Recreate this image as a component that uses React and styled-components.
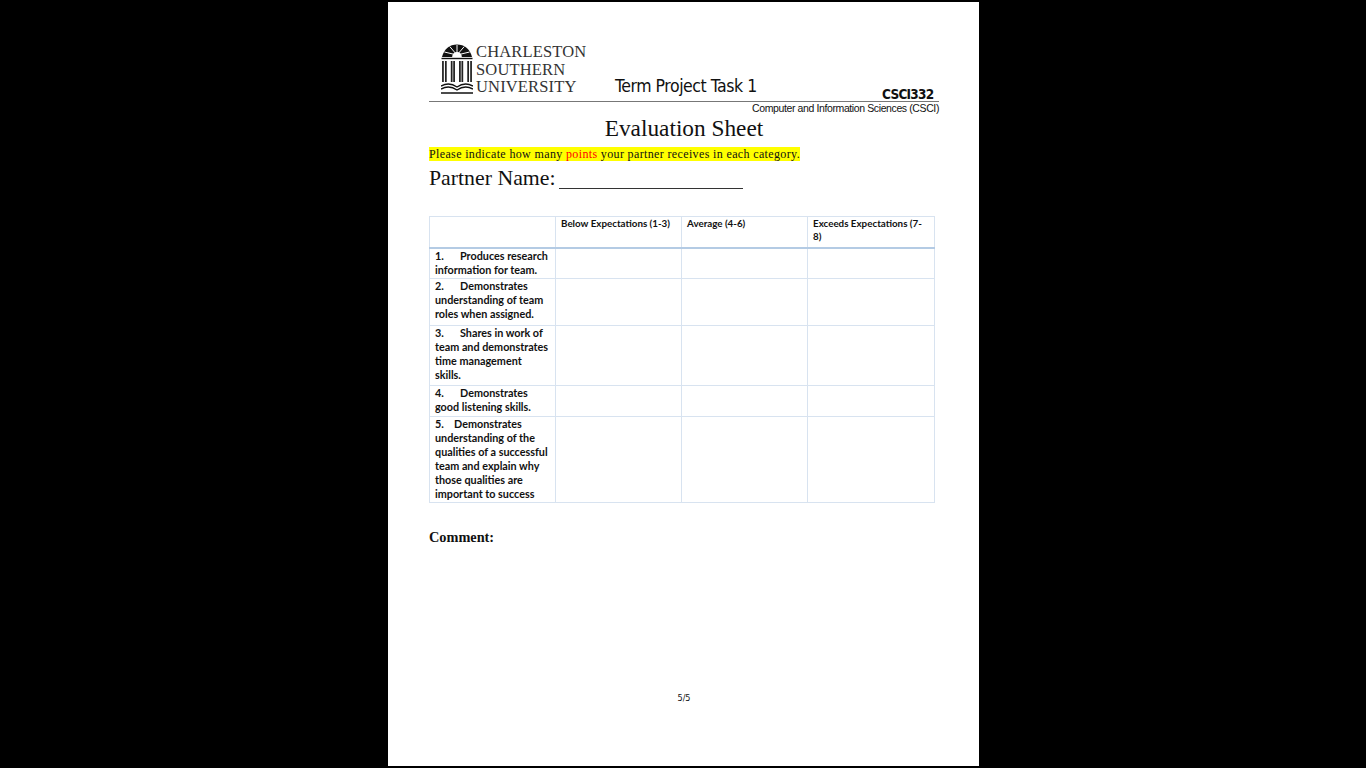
import React from 'react';
import styled, { createGlobalStyle } from 'styled-components';

const GlobalStyle = createGlobalStyle`
  html, body {
    margin: 0;
    padding: 0;
    background: #000;
  }
`;

const Viewer = styled.div`
  height: 768px;
  overflow: hidden;
  background: #000;
  display: flex;
  justify-content: center;
  padding-top: 2px;
  box-sizing: border-box;
`;

const Page = styled.div`
  width: 591px;
  height: 764px;
  margin-left: 1px;
  background: #fff;
  box-sizing: border-box;
  padding: 42px 40px 0 41px;
  color: #111;
  font-family: "Liberation Serif", serif;
`;

const Header = styled.div`
  height: 57px;
  display: flex;
  align-items: flex-end;
  border-bottom: 1px solid #777;
`;

const Logo = styled.div`
  width: 186px;
  height: 57px;
  display: flex;
  padding-left: 12px;
  box-sizing: border-box;
`;

const LogoText = styled.div`
  margin-left: 3px;
  margin-top: -1px;
  font-size: 16.5px;
  line-height: 17.5px;
  letter-spacing: 0.15px;
  color: #333;
`;

const TermTitle = styled.div`
  font-family: "DejaVu Sans", sans-serif;
  font-stretch: condensed;
  font-size: 17.5px;
  line-height: 20px;
  letter-spacing: -0.45px;
  margin-bottom: 5px;
  width: 267px;
`;

const Course = styled.div`
  font-family: "DejaVu Sans", sans-serif;
  font-weight: bold;
  font-stretch: condensed;
  font-size: 13.5px;
  line-height: 14px;
  letter-spacing: -0.75px;
`;

const Dept = styled.div`
  font-family: "Liberation Sans", sans-serif;
  font-size: 10.5px;
  line-height: 12px;
  text-align: right;
  letter-spacing: -0.39px;
`;

const Heading = styled.div`
  margin-top: 1px;
  font-size: 23.3px;
  line-height: 26px;
  text-align: center;
`;

const Notice = styled.div`
  margin-top: 5px;
  font-size: 12px;
  line-height: 16px;
  letter-spacing: 0.36px;
`;

const Marked = styled.span`
  background: #ffff00;
`;

const Red = styled.span`
  color: #ff0000;
`;

const Partner = styled.div`
  margin-top: 3px;
  font-size: 21.8px;
  line-height: 26px;
  display: flex;
  align-items: flex-end;
`;

const Blank = styled.span`
  display: inline-block;
  width: 184px;
  margin-left: 3px;
  margin-bottom: 2px;
  border-bottom: 1px solid #333;
`;

const Grid = styled.table`
  margin-top: 25px;
  width: 506px;
  table-layout: fixed;
  border-collapse: collapse;
  font-family: Lato, "Liberation Sans", sans-serif;
  font-weight: bold;
  color: #111;
`;

const Cell = styled.td`
  border: 1px solid #d8e3f0;
  border-bottom: ${(p) => (p.$head ? '2px solid #b4cbe4' : '1px solid #d8e3f0')};
  padding: 0 ${(p) => (p.$head ? '8px' : '5px')} 0 5px;
  vertical-align: top;
  height: ${(p) => p.$h}px;
  box-sizing: border-box;
  font-size: ${(p) => (p.$head ? '9.8px' : '10.8px')};
  line-height: ${(p) => (p.$head ? '13px' : '14px')};
  white-space: pre-line;
`;

const Num = styled.span`
  display: inline-block;
  width: ${(p) => p.$w || 25}px;
`;

const Comment = styled.div`
  margin-top: 25px;
  font-weight: bold;
  font-size: 14.3px;
  line-height: 18px;
`;

const Footer = styled.div`
  margin-top: 146px;
  text-align: center;
  font-family: "DejaVu Sans", sans-serif;
  font-stretch: condensed;
  font-size: 9px;
  line-height: 12px;
`;

const Crest = () => (
  <svg width="32" height="50" viewBox="0 0 33 50" preserveAspectRatio="none">
    <path d="M1 13 C3 5 9 0.5 16.5 0.5 C24 0.5 30 5 32 13 Z" fill="#111" />
    <path d="M16.5 1 V11 M16.5 11 L9 2.5 M16.5 11 L24 2.5 M16.5 11 L3.5 8 M16.5 11 L29.5 8" stroke="#fff" strokeWidth="1" />
    <path d="M11.5 13 A5 5 0 0 1 21.5 13 Z" fill="#fff" />
    <path d="M0.5 14.5 H32.5" stroke="#111" strokeWidth="1.4" />
    <path d="M2 17 V38 M5 17 V38 M11 17 V38 M13.5 17 V38 M19.5 17 V38 M22 17 V38 M28 17 V38 M31 17 V38" stroke="#222" strokeWidth="1.8" />
    <path d="M0 42 C6 39 12 40 16.5 43 C21 40 27 39 33 42 M0 45 C6 42 12 43 16.5 46 C21 43 27 42 33 45 M0 49 H33" stroke="#111" strokeWidth="1.4" fill="none" />
  </svg>
);

const rows = [
  { h: 31, n: '1.', text: 'Produces research information for team.' },
  { h: 47, n: '2.', text: 'Demonstrates understanding of team roles when assigned.' },
  { h: 60, n: '3.', text: 'Shares in work of team and demonstrates time management\nskills.' },
  { h: 31, n: '4.', text: 'Demonstrates good listening skills.' },
  { h: 86, n: '5.', w: 19, text: 'Demonstrates understanding of the qualities of a successful team and explain why those qualities are important to success' },
];

export default function App() {
  return (
    <Viewer>
      <GlobalStyle />
      <Page>
        <Header>
          <Logo>
            <Crest />
            <LogoText>
              CHARLESTON<br />SOUTHERN<br />UNIVERSITY
            </LogoText>
          </Logo>
          <TermTitle>Term Project Task 1</TermTitle>
          <Course>CSCI332</Course>
        </Header>
        <Dept>Computer and Information Sciences (CSCI)</Dept>
        <Heading>Evaluation Sheet</Heading>
        <Notice>
          <Marked>Please indicate how many <Red>points</Red> your partner receives in each category.</Marked>
        </Notice>
        <Partner>Partner Name: <Blank /></Partner>
        <Grid>
          <colgroup>
            <col style={{ width: 126 }} />
            <col style={{ width: 126 }} />
            <col style={{ width: 126 }} />
            <col style={{ width: 127 }} />
          </colgroup>
          <tbody>
            <tr>
              <Cell $head $h={31} />
              <Cell $head $h={31}>Below Expectations (1-3)</Cell>
              <Cell $head $h={31}>Average (4-6)</Cell>
              <Cell $head $h={31}>Exceeds Expectations (7-8)</Cell>
            </tr>
            {rows.map((r) => (
              <tr key={r.n}>
                <Cell $h={r.h}><Num $w={r.w}>{r.n}</Num>{r.text}</Cell>
                <Cell $h={r.h} />
                <Cell $h={r.h} />
                <Cell $h={r.h} />
              </tr>
            ))}
          </tbody>
        </Grid>
        <Comment>Comment:</Comment>
        <Footer>5/5</Footer>
      </Page>
    </Viewer>
  );
}
